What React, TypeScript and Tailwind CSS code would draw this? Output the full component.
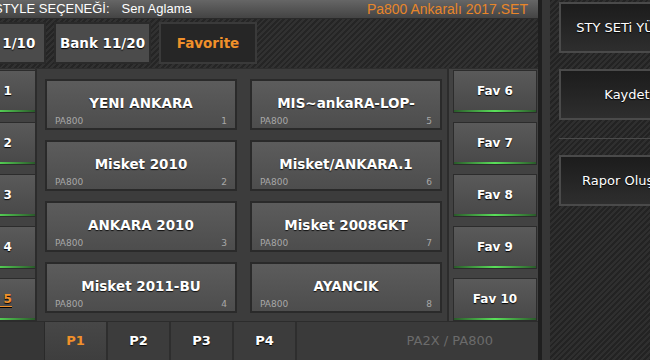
import React from "react";

const FONT = { fontFamily: '"DejaVu Sans", "Liberation Sans", sans-serif' };

function FavBtn({ label, active }: { label: string; active?: boolean }) {
  return (
    <div className="h-[43px] w-[84px] shrink-0 border border-[#2c2c2c] bg-gradient-to-b from-[#5a5a5a] to-[#484848] flex flex-col">
      <div
        className={
          "flex-1 flex items-center justify-center text-[12px] font-bold pt-[1px] [text-shadow:0_1px_1px_#000] " +
          (active ? "text-[#f0902a] underline underline-offset-[3px] decoration-[#f0902a]" : "text-white")
        }
      >
        {label}
      </div>
      <div className="h-[2px] bg-[linear-gradient(90deg,#2a5a2a,#5ae05a_50%,#2a5a2a)]" />
    </div>
  );
}

function StyleBtn({ title, n }: { title: string; n: number }) {
  return (
    <div className="w-[192px] h-[51px] border-2 border-[#2a2a2a] bg-gradient-to-b from-[#5c5c5c] to-[#4d4d4d] flex flex-col">
      <div className="pt-[13px] leading-[18px] text-center text-white font-bold text-[13.5px] [text-shadow:0_1px_1px_#111]">
        {title}
      </div>
      <div className="mt-[3px] leading-[12px] flex justify-between px-[8px] text-[9px] text-[#a8a8a8]">
        <span>PA800</span>
        <span>{n}</span>
      </div>
    </div>
  );
}

function RightBtn({ label }: { label: string }) {
  return (
    <div className="w-[136px] h-[51px] shrink-0 border-2 border-[#4a4a4a] bg-gradient-to-b from-[#1c1c1c] to-[#2e2e2e] flex items-center justify-center text-white text-[13px] whitespace-nowrap [text-shadow:0_1px_1px_#000]">
      {label}
    </div>
  );
}

export default function App() {
  const styles: [string, number][] = [
    ["YENI ANKARA", 1],
    ["MIS~ankaRA-LOP-", 5],
    ["Misket 2010", 2],
    ["Misket/ANKARA.1", 6],
    ["ANKARA 2010", 3],
    ["Misket 2008GKT", 7],
    ["Misket 2011-BU", 4],
    ["AYANCIK", 8],
  ];
  return (
    <div className="w-[650px] h-[360px] flex overflow-hidden bg-[#2a2a2a]" style={FONT}>
      {/* Left main section */}
      <div className="w-[538px] h-full flex flex-col shrink-0">
        {/* Header */}
        <div
          className="h-[19px] shrink-0 flex items-center justify-between bg-gradient-to-b from-[#666] to-[#444] border-b border-[#2a2a2a] overflow-hidden whitespace-nowrap pr-[10px]"
          style={{ fontFamily: '"Liberation Sans", Arial, sans-serif' }}
        >
          <div className="flex ml-[-6px] text-white text-[13px]">
            <span>STYLE SEÇENEĞİ:</span>
            <span className="ml-[12px]">Sen Aglama</span>
          </div>
          <span className="text-[#e8862a] text-[14px]">Pa800 Ankaralı 2017.SET</span>
        </div>
        {/* Tab row */}
        <div className="h-[49px] shrink-0 bg-[repeating-linear-gradient(135deg,#252525_0px,#252525_2px,#313131_2px,#313131_4px)] flex items-start pt-[3px] gap-[8px] overflow-hidden">
          <div className="ml-[-51px] w-[97px] h-[42px] shrink-0 border-2 border-[#2a2a2a] bg-[#4b4b4b] flex items-center justify-center text-white font-bold text-[13.5px] [text-shadow:0_1px_1px_#000]">
            Bank 1/10
          </div>
          <div className="w-[97px] h-[42px] shrink-0 border-2 border-[#2a2a2a] bg-[#4b4b4b] flex items-center justify-center text-white font-bold text-[13.5px] [text-shadow:0_1px_1px_#000]">
            Bank 11/20
          </div>
          <div className="w-[98px] h-[42px] shrink-0 border-2 border-[#3a3a3a] bg-[#262626] flex items-center justify-center text-[#f0902a] font-bold text-[13.5px]">
            Favorite
          </div>
        </div>
        {/* Main panel */}
        <div className="h-[253px] shrink-0 flex bg-[#3c3c3c] border-t border-[#2e2e2e]">
          {/* Left fav column (scrolled) */}
          <div className="w-[37px] shrink-0 overflow-hidden flex flex-col gap-[9px] pt-[1px] bg-[#424242] border-r-2 border-[#2c2c2c]">
            {["Fav 1", "Fav 2", "Fav 3", "Fav 4", "Fav 5"].map((l, i) => (
              <div key={l} className="ml-[-48px]">
                <FavBtn label={l} active={i === 4} />
              </div>
            ))}
          </div>
          {/* Center grid */}
          <div className="w-[410px] shrink-0 pt-[10px] pl-[8px]">
            <div className="grid grid-cols-[192px_192px] gap-x-[13px] gap-y-[10px]">
              {styles.map(([t, n]) => (
                <StyleBtn key={n} title={t} n={n} />
              ))}
            </div>
          </div>
          {/* Right fav column */}
          <div className="flex-1 flex flex-col gap-[9px] pt-[1px] pl-[4px] bg-[#424242] border-l-2 border-[#2c2c2c]">
            {["Fav 6", "Fav 7", "Fav 8", "Fav 9", "Fav 10"].map((l) => (
              <FavBtn key={l} label={l} />
            ))}
          </div>
        </div>
        {/* Bottom bar */}
        <div className="flex-1 flex bg-[#3a3a3a] border-t border-[#2c2c2c] text-[13px]">
          <div className="w-[45px] shrink-0 bg-[#363636] border-r border-[#2a2a2a]" />
          {["P1", "P2", "P3", "P4"].map((p, i) => (
            <div
              key={p}
              className={
                "w-[63px] shrink-0 flex items-center justify-center font-bold border-r-2 border-[#2e2e2e] " +
                (i === 0 ? "bg-gradient-to-b from-[#474747] to-[#3e3e3e] text-[#f0902a]" : "bg-[#3c3c3c] text-white [text-shadow:0_1px_1px_#000]")
              }
            >
              {p}
            </div>
          ))}
          <div className="flex-1 flex items-center justify-end pr-[45px] text-[#6b6b6b]">PA2X / PA800</div>
        </div>
      </div>
      {/* Divider */}
      <div className="w-[4px] shrink-0 bg-[#1f1f1f]" />
      <div className="w-[8px] shrink-0 bg-[#363636]" />
      {/* Right panel */}
      <div
        className="flex-1 h-full overflow-hidden bg-[repeating-linear-gradient(135deg,#232323_0px,#232323_2px,#2f2f2f_2px,#2f2f2f_4px)] flex flex-col pl-[9px] pt-[2px]"
        style={{ fontFamily: '"DejaVu Sans", sans-serif' }}
      >
        <RightBtn label="STY SETi YÜKLE" />
        <div className="h-[16px] shrink-0" />
        <RightBtn label="Kaydet" />
        <div className="h-[18px] shrink-0" />
        <div className="h-px w-[136px] bg-[#4a4a4a] shrink-0" />
        <div className="h-[16px] shrink-0" />
        <RightBtn label="Rapor Oluştur" />
      </div>
    </div>
  );
}
